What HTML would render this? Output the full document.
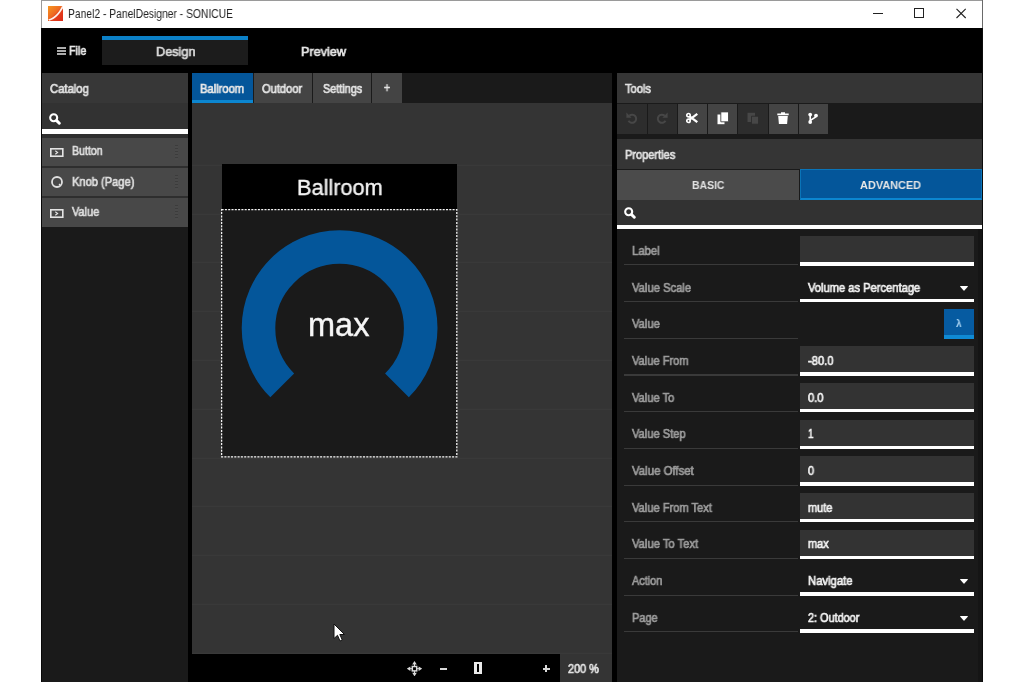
<!DOCTYPE html>
<html lang="en">
<head>
<meta charset="utf-8">
<title>Panel2 - PanelDesigner - SONICUE</title>
<style>
*{box-sizing:border-box;margin:0;padding:0}
html,body{width:1024px;height:682px;overflow:hidden;background:#fff}
body{font-family:"Liberation Sans","DejaVu Sans",sans-serif;font-size:12px;position:relative}
#win{position:absolute;left:41px;top:0;width:942px;height:682px;background:#000;overflow:hidden}
.abs{position:absolute}
.t{position:absolute;white-space:nowrap;transform-origin:0 50%;line-height:1;will-change:transform}
</style>
</head>
<body>
<div id="win">
  <div class="abs" style="left:0.00px;top:0.00px;width:942.00px;height:28.00px;background:#fff;border-top:1px solid #9a9a9a"></div>
  <svg class="abs" style="left:7.20px;top:5.60px" width="15.2" height="15" viewBox="0 0 15.2 15"><defs><linearGradient id="lg" x1="0" y1="0" x2="1" y2="1"><stop offset="0" stop-color="#f7981f"/><stop offset=".45" stop-color="#ee6a22"/><stop offset=".6" stop-color="#e4401c"/><stop offset="1" stop-color="#dc2818"/></linearGradient></defs><rect width="15.200" height="15" fill="url(#lg)"/><path d="M.3 13.300C5.500 12.300 10.500 7.500 14 .3L15.200 0V1.800C11.500 8.500 6.500 13.200 1.200 14.700Z" fill="#fff" opacity=".93"/></svg>
  <span class="t" style="left:27.40px;top:7.74px;font-size:12px;color:#222;transform:scaleX(0.8588);">Panel2 - PanelDesigner - SONICUE</span>
  <svg class="abs" style="left:827.00px;top:4.00px" width="110" height="20" viewBox="0 0 110 20"><path d="M5 9.500H15" stroke="#222" stroke-width="1" fill="none"/><rect x="46.500" y="4.500" width="9" height="9" stroke="#222" stroke-width="1" fill="none"/><path d="M88.500 4.800L97.700 14M97.700 4.800L88.500 14" stroke="#222" stroke-width="1.100" fill="none"/></svg>
  <div class="abs" style="left:941.00px;top:0.00px;width:1.00px;height:28.00px;background:#6a6a6a;"></div>
  <div class="abs" style="left:0.00px;top:0.00px;width:1.00px;height:28.00px;background:#9a9a9a;"></div>
  <div class="abs" style="left:0.00px;top:28.00px;width:942.00px;height:45.00px;background:#000;"></div>
  <svg class="abs" style="left:16.00px;top:47.00px" width="9" height="8" viewBox="0 0 9 8"><path d="M0 1H9M0 4H9M0 7H9" stroke="#e6e6e6" stroke-width="1.700"/></svg>
  <span class="t" style="left:28.20px;top:45.04px;font-size:12px;-webkit-text-stroke:0.7px #e8e8e8;color:#e8e8e8;transform:scaleX(0.8929);">File</span>
  <div class="abs" style="left:60.80px;top:36.00px;width:146.70px;height:29.20px;background:#1c1c1c;border-top:4px solid #0b80c6"></div>
  <span class="t" style="left:114.50px;top:44.60px;font-size:13px;-webkit-text-stroke:0.7px #dadada;color:#dadada;transform:scaleX(0.9753);">Design</span>
  <span class="t" style="left:259.60px;top:44.60px;font-size:13px;-webkit-text-stroke:0.7px #e6e6e6;color:#e6e6e6;transform:scaleX(0.9747);">Preview</span>
  <div class="abs" style="left:0.00px;top:73.00px;width:146.50px;height:609.00px;background:#1a1a1a;"></div>
  <div class="abs" style="left:0.00px;top:73.00px;width:146.50px;height:30.40px;background:#373737;"></div>
  <span class="t" style="left:9.00px;top:82.54px;font-size:12px;-webkit-text-stroke:0.7px #e2e2e2;color:#e2e2e2;transform:scaleX(0.9378);">Catalog</span>
  <div class="abs" style="left:0.00px;top:103.40px;width:146.50px;height:26.00px;background:#323232;"></div>
  <svg class="abs" style="left:7.60px;top:112.80px" width="12" height="12" viewBox="0 0 12 12"><circle cx="4.700" cy="4.700" r="3.500" stroke="#fff" stroke-width="2.100" fill="none"/><path d="M7.600 7.600L10.300 10.300" stroke="#fff" stroke-width="2.900" stroke-linecap="round"/></svg>
  <div class="abs" style="left:0.00px;top:129.40px;width:146.50px;height:4.40px;background:#fff;"></div>
  <div class="abs" style="left:0.00px;top:133.50px;width:146.50px;height:93.50px;background:#2e2e2e;"></div>
  <div class="abs" style="left:1.00px;top:137.60px;width:145.50px;height:28.40px;background:#484848;"></div>
  <svg class="abs" style="left:9.00px;top:148.00px" width="14" height="9" viewBox="0 0 14 9"><rect x=".8" y=".8" width="12" height="7.400" stroke="#e4e4e4" stroke-width="1.600" fill="none"/><path d="M5.300 2.800L7.600 4.500L5.300 6.200" stroke="#e4e4e4" stroke-width="1.100" fill="none"/></svg>
  <span class="t" style="left:31.30px;top:145.44px;font-size:12px;-webkit-text-stroke:0.7px #dedede;color:#dedede;transform:scaleX(0.8835);">Button</span>
  <div class="abs" style="left:133.70px;top:144.60px;width:3.50px;height:15.00px;background:transparent;background:repeating-linear-gradient(to bottom,#3c3c3c 0,#3c3c3c 1.200px,#4a4a4a 1.200px,#4a4a4a 3px)"></div>
  <div class="abs" style="left:1.00px;top:168.00px;width:145.50px;height:28.40px;background:#484848;"></div>
  <svg class="abs" style="left:9.80px;top:176.40px" width="12" height="12" viewBox="0 0 12 12"><circle cx="6" cy="6" r="5" stroke="#e0e0e0" stroke-width="1.800" fill="none"/><path d="M8 8L9.500 9.500" stroke="#e4e4e4" stroke-width="1.200"/></svg>
  <span class="t" style="left:31.30px;top:175.84px;font-size:12px;-webkit-text-stroke:0.7px #dedede;color:#dedede;transform:scaleX(0.9262);">Knob (Page)</span>
  <div class="abs" style="left:133.70px;top:175.00px;width:3.50px;height:15.00px;background:transparent;background:repeating-linear-gradient(to bottom,#3c3c3c 0,#3c3c3c 1.200px,#4a4a4a 1.200px,#4a4a4a 3px)"></div>
  <div class="abs" style="left:1.00px;top:198.40px;width:145.50px;height:28.40px;background:#484848;"></div>
  <svg class="abs" style="left:9.00px;top:208.80px" width="14" height="9" viewBox="0 0 14 9"><rect x=".8" y=".8" width="12" height="7.400" stroke="#e4e4e4" stroke-width="1.600" fill="none"/><path d="M5.300 2.800L7.600 4.500L5.300 6.200" stroke="#e4e4e4" stroke-width="1.100" fill="none"/></svg>
  <span class="t" style="left:31.30px;top:206.24px;font-size:12px;-webkit-text-stroke:0.7px #dedede;color:#dedede;transform:scaleX(0.9109);">Value</span>
  <div class="abs" style="left:133.70px;top:205.40px;width:3.50px;height:15.00px;background:transparent;background:repeating-linear-gradient(to bottom,#3c3c3c 0,#3c3c3c 1.200px,#4a4a4a 1.200px,#4a4a4a 3px)"></div>
  <div class="abs" style="left:0.00px;top:28.00px;width:1.00px;height:654.00px;background:#080808;"></div>
  <div class="abs" style="left:146.50px;top:73.00px;width:4.70px;height:609.00px;background:#000;"></div>
  <div class="abs" style="left:570.80px;top:73.00px;width:4.90px;height:609.00px;background:#000;"></div>
  <div class="abs" style="left:151.20px;top:73.00px;width:419.60px;height:30.00px;background:#1a1a1a;"></div>
  <div class="abs" style="left:151.20px;top:103.00px;width:419.60px;height:579.00px;background:#343434;background-image:repeating-linear-gradient(to bottom,transparent 0,transparent 47.800px,#3a3a3a 47.800px,#3a3a3a 48.800px),repeating-linear-gradient(to right,transparent 0,transparent 47.800px,transparent 47.800px,transparent 48.800px);background-position:0 13.900px,28.800px 0"></div>
  <div class="abs" style="left:151.20px;top:73.20px;width:60.80px;height:29.80px;background:#04569a;border-bottom:3px solid #0c86d0"></div>
  <div class="abs" style="left:213.00px;top:73.20px;width:58.20px;height:29.80px;background:#444;"></div>
  <div class="abs" style="left:272.20px;top:73.20px;width:58.00px;height:29.80px;background:#444;"></div>
  <div class="abs" style="left:331.20px;top:73.20px;width:29.40px;height:29.80px;background:#444;"></div>
  <span class="t" style="left:159.40px;top:82.54px;font-size:12px;-webkit-text-stroke:0.7px #e8e8e8;color:#e8e8e8;transform:scaleX(0.9309);">Ballroom</span>
  <span class="t" style="left:221.40px;top:82.54px;font-size:12px;-webkit-text-stroke:0.7px #e4e4e4;color:#e4e4e4;transform:scaleX(0.9268);">Outdoor</span>
  <span class="t" style="left:281.50px;top:82.54px;font-size:12px;-webkit-text-stroke:0.7px #e4e4e4;color:#e4e4e4;transform:scaleX(0.9037);">Settings</span>
  <span class="t" style="left:342.50px;top:82.04px;font-size:12px;-webkit-text-stroke:0.7px #e4e4e4;color:#e4e4e4;transform:scaleX(0.8571);">+</span>
  <div class="abs" style="left:181.00px;top:164.00px;width:235.00px;height:45.00px;background:#000;"></div>
  <span class="t" style="left:256.10px;top:176.68px;font-size:22px;color:#f4f4f4;transform:scaleX(0.9865);-webkit-text-stroke:.35px #f4f4f4;">Ballroom</span>
  <div class="abs" style="left:180.50px;top:209.00px;width:235.30px;height:247.30px;background:#1a1a1a;"></div>
  <svg class="abs" style="left:180.00px;top:208.50px" width="237" height="249" viewBox="0 0 237 249"><rect x=".6" y=".6" width="235.200" height="247.200" fill="none" stroke="#f4f4f4" stroke-width="1.300" stroke-dasharray="2 1.300"/><path d="M61.25 176.45A81.1 81.1 0 1 1 175.95 176.45" fill="none" stroke="#04569a" stroke-width="33.6"/></svg>
  <span class="t" style="left:267.10px;top:308.99px;font-size:32.5px;color:#f6f6f6;transform:scaleX(1.0004);-webkit-text-stroke:.4px #f6f6f6;">max</span>
  <svg class="abs" style="left:292.00px;top:623.00px" width="13" height="20" viewBox="0 0 13 20"><path d="M1 1V15.500L4.500 12.300L7 18L9.300 17L6.800 11.500H11.500Z" fill="#fff" stroke="#111" stroke-width="1"/></svg>
  <div class="abs" style="left:151.20px;top:654.00px;width:368.10px;height:28.00px;background:#000;"></div>
  <svg class="abs" style="left:365.50px;top:660.70px" width="15" height="15.4" viewBox="0 0 15 15.4"><g fill="#dcdcdc"><path d="M7.500 0L9.800 3.600H5.200Z"/><path d="M7.500 15.400L9.800 11.800H5.200Z"/><path d="M-.2 7.700L3.400 5.400V10Z"/><path d="M15.200 7.700L11.600 5.400V10Z"/></g><path d="M7.500 3V12.400M2.800 7.700H12.200" stroke="#dcdcdc" stroke-width="1"/><rect x="5.300" y="5.500" width="4.400" height="4.400" fill="#000" stroke="#dcdcdc" stroke-width="1.500"/></svg>
  <div class="abs" style="left:399.20px;top:667.90px;width:7.20px;height:1.70px;background:#d8d8d8;"></div>
  <div class="abs" style="left:433.00px;top:662.30px;width:8.00px;height:11.60px;background:#eaeaea;"></div>
  <div class="abs" style="left:436.40px;top:663.80px;width:1.30px;height:8.60px;background:#000;"></div>
  <div class="abs" style="left:501.50px;top:667.90px;width:7.20px;height:1.70px;background:#d8d8d8;"></div>
  <div class="abs" style="left:504.30px;top:665.10px;width:1.70px;height:7.20px;background:#d8d8d8;"></div>
  <span class="t" style="left:527.00px;top:662.74px;font-size:12px;-webkit-text-stroke:0.7px #e2e2e2;color:#e2e2e2;transform:scaleX(0.9088);">200 %</span>
  <div class="abs" style="left:575.70px;top:73.00px;width:366.30px;height:609.00px;background:#1a1a1a;"></div>
  <div class="abs" style="left:575.70px;top:73.20px;width:366.30px;height:29.80px;background:#353535;"></div>
  <span class="t" style="left:584.20px;top:82.54px;font-size:12px;-webkit-text-stroke:0.7px #e2e2e2;color:#e2e2e2;transform:scaleX(0.9250);">Tools</span>
  <div class="abs" style="left:575.70px;top:139.20px;width:366.30px;height:30.20px;background:#353535;"></div>
  <span class="t" style="left:584.20px;top:148.54px;font-size:12px;-webkit-text-stroke:0.7px #e2e2e2;color:#e2e2e2;transform:scaleX(0.9187);">Properties</span>
  <div class="abs" style="left:576.40px;top:103.50px;width:29.20px;height:30.10px;background:#2d2d2d;"></div>
  <svg class="abs" style="left:584.80px;top:112.30px" width="12" height="12.5" viewBox="0 0 12 12.5"><path d="M3.300 3.700A4.100 4.100 0 1 1 2.500 8.800" stroke="#474747" stroke-width="2" fill="none"/><path d="M.4 .6V5.800H5.600Z" fill="#474747"/></svg>
  <div class="abs" style="left:606.66px;top:103.50px;width:29.20px;height:30.10px;background:#2d2d2d;"></div>
  <svg class="abs" style="left:615.06px;top:112.30px" width="12" height="12.5" viewBox="0 0 12 12.5"><path d="M8.700 3.700A4.100 4.100 0 1 0 9.500 8.800" stroke="#474747" stroke-width="2" fill="none"/><path d="M11.600 .6V5.800H6.400Z" fill="#474747"/></svg>
  <div class="abs" style="left:636.92px;top:103.50px;width:29.20px;height:30.10px;background:#444;"></div>
  <svg class="abs" style="left:645.32px;top:112.30px" width="12" height="12.5" viewBox="0 0 12 12.5"><path d="M3.600 4.300L11.300 10.200M3.600 7.700L11.300 1.800" stroke="#fff" stroke-width="2.300" fill="none"/><circle cx="2.500" cy="3.200" r="1.700" stroke="#fff" stroke-width="1.700" fill="none"/><circle cx="2.500" cy="8.800" r="1.700" stroke="#fff" stroke-width="1.700" fill="none"/></svg>
  <div class="abs" style="left:667.18px;top:103.50px;width:29.20px;height:30.10px;background:#444;"></div>
  <svg class="abs" style="left:675.58px;top:112.30px" width="12" height="12.5" viewBox="0 0 12 12.5"><path d="M.5 2.500H7.500V12.200H.5Z" fill="#fff"/><path d="M3.800 -.1H11.500V9.800H3.800Z" fill="#fff" stroke="#444" stroke-width=".9"/></svg>
  <div class="abs" style="left:697.44px;top:103.50px;width:29.20px;height:30.10px;background:#2d2d2d;"></div>
  <svg class="abs" style="left:705.84px;top:112.30px" width="12" height="12.5" viewBox="0 0 12 12.5"><path d="M.5 .8H8V10H.5Z" fill="#474747"/><path d="M4.500 4.200H11.500V12.200H4.500Z" fill="#474747" stroke="#2d2d2d" stroke-width=".9"/></svg>
  <div class="abs" style="left:727.70px;top:103.50px;width:29.20px;height:30.10px;background:#444;"></div>
  <svg class="abs" style="left:736.10px;top:112.30px" width="12" height="12.5" viewBox="0 0 12 12.5"><path d="M.3 1.500H11.700V3.300H.3ZM4 .2H8V2H4ZM1.200 4.100H10.800L10.100 12H1.900Z" fill="#fff"/></svg>
  <div class="abs" style="left:757.96px;top:103.50px;width:29.20px;height:30.10px;background:#444;"></div>
  <svg class="abs" style="left:766.36px;top:112.30px" width="12" height="12.5" viewBox="0 0 12 12.5"><circle cx="3.200" cy="2.600" r="1.900" fill="#fff"/><circle cx="3.200" cy="10" r="1.900" fill="#fff"/><circle cx="9" cy="3.600" r="1.900" fill="#fff"/><path d="M3.200 2.600V10M9 3.600C9 7.300 3.200 6.200 3.200 9.500" stroke="#fff" stroke-width="1.600" fill="none"/></svg>
  <div class="abs" style="left:575.70px;top:169.60px;width:182.60px;height:30.20px;background:#4b4b4b;"></div>
  <div class="abs" style="left:759.00px;top:169.40px;width:182.00px;height:30.40px;background:#04569a;border:1.200px solid #0a74b8;border-bottom:2.800px solid #0c86d0"></div>
  <span class="t" style="left:650.90px;top:179.79px;font-size:11px;font-weight:bold;color:#e2e2e2;transform:scaleX(0.9460);">BASIC</span>
  <span class="t" style="left:819.20px;top:179.79px;font-size:11px;font-weight:bold;color:#e6e6e6;transform:scaleX(0.9919);">ADVANCED</span>
  <div class="abs" style="left:575.70px;top:199.80px;width:366.30px;height:25.60px;background:#323232;"></div>
  <svg class="abs" style="left:583.20px;top:206.80px" width="12" height="12" viewBox="0 0 12 12"><circle cx="4.700" cy="4.700" r="3.500" stroke="#fff" stroke-width="2.100" fill="none"/><path d="M7.600 7.600L10.300 10.300" stroke="#fff" stroke-width="2.900" stroke-linecap="round"/></svg>
  <div class="abs" style="left:575.70px;top:225.30px;width:366.30px;height:3.80px;background:#fff;"></div>
  <div class="abs" style="left:936.60px;top:229.10px;width:5.40px;height:453.00px;background:#151515;"></div>
  <span class="t" style="left:591.30px;top:244.84px;font-size:12px;-webkit-text-stroke:0.7px #9c9c9c;color:#9c9c9c;transform:scaleX(0.9430);">Label</span>
  <div class="abs" style="left:583.00px;top:264.30px;width:173.50px;height:1.20px;background:#3a3a3a;"></div>
  <div class="abs" style="left:759.30px;top:236.00px;width:173.90px;height:26.00px;background:#333;"></div>
  <div class="abs" style="left:759.30px;top:262.00px;width:173.90px;height:3.60px;background:#fff;"></div>
  <span class="t" style="left:591.30px;top:281.54px;font-size:12px;-webkit-text-stroke:0.7px #9c9c9c;color:#9c9c9c;transform:scaleX(0.9347);">Value Scale</span>
  <div class="abs" style="left:583.00px;top:301.00px;width:173.50px;height:1.20px;background:#3a3a3a;"></div>
  <div class="abs" style="left:759.30px;top:298.70px;width:173.90px;height:3.60px;background:#fff;"></div>
  <span class="t" style="left:767.20px;top:281.54px;font-size:12px;-webkit-text-stroke:0.7px #f2f2f2;color:#f2f2f2;transform:scaleX(0.9292);">Volume as Percentage</span>
  <svg class="abs" style="left:919.20px;top:285.80px" width="8" height="4.8" viewBox="0 0 8 4.8"><path d="M.4 0H7.600Q8.200 .2 7.700 .8L4.400 4.500Q4 4.900 3.600 4.500L.3 .8Q-.2 .2 .4 0Z" fill="#fff"/></svg>
  <span class="t" style="left:591.30px;top:318.24px;font-size:12px;-webkit-text-stroke:0.7px #9c9c9c;color:#9c9c9c;transform:scaleX(0.9311);">Value</span>
  <div class="abs" style="left:583.00px;top:337.70px;width:173.50px;height:1.20px;background:#3a3a3a;"></div>
  <div class="abs" style="left:903.40px;top:309.40px;width:29.80px;height:29.40px;background:#065ba1;border-bottom:4px solid #0f8ad4"></div>
  <span class="t" style="left:915.40px;top:318.37px;font-size:11.5px;font-weight:bold;color:#a9d3f3;transform:scaleX(0.8784);">λ</span>
  <span class="t" style="left:591.30px;top:354.94px;font-size:12px;-webkit-text-stroke:0.7px #9c9c9c;color:#9c9c9c;transform:scaleX(0.9227);">Value From</span>
  <div class="abs" style="left:583.00px;top:374.40px;width:173.50px;height:1.20px;background:#3a3a3a;"></div>
  <div class="abs" style="left:759.30px;top:346.10px;width:173.90px;height:26.00px;background:#333;"></div>
  <div class="abs" style="left:759.30px;top:372.10px;width:173.90px;height:3.60px;background:#fff;"></div>
  <span class="t" style="left:767.20px;top:354.94px;font-size:12px;-webkit-text-stroke:0.7px #f2f2f2;color:#f2f2f2;transform:scaleX(0.9315);">-80.0</span>
  <span class="t" style="left:591.30px;top:391.64px;font-size:12px;-webkit-text-stroke:0.7px #9c9c9c;color:#9c9c9c;transform:scaleX(0.9249);">Value To</span>
  <div class="abs" style="left:583.00px;top:411.10px;width:173.50px;height:1.20px;background:#3a3a3a;"></div>
  <div class="abs" style="left:759.30px;top:382.80px;width:173.90px;height:26.00px;background:#333;"></div>
  <div class="abs" style="left:759.30px;top:408.80px;width:173.90px;height:3.60px;background:#fff;"></div>
  <span class="t" style="left:767.20px;top:391.64px;font-size:12px;-webkit-text-stroke:0.7px #f2f2f2;color:#f2f2f2;transform:scaleX(0.9263);">0.0</span>
  <span class="t" style="left:591.30px;top:428.34px;font-size:12px;-webkit-text-stroke:0.7px #9c9c9c;color:#9c9c9c;transform:scaleX(0.9244);">Value Step</span>
  <div class="abs" style="left:583.00px;top:447.80px;width:173.50px;height:1.20px;background:#3a3a3a;"></div>
  <div class="abs" style="left:759.30px;top:419.50px;width:173.90px;height:26.00px;background:#333;"></div>
  <div class="abs" style="left:759.30px;top:445.50px;width:173.90px;height:3.60px;background:#fff;"></div>
  <span class="t" style="left:767.20px;top:428.34px;font-size:12px;-webkit-text-stroke:0.7px #f2f2f2;color:#f2f2f2;transform:scaleX(0.8151);">1</span>
  <span class="t" style="left:591.30px;top:465.04px;font-size:12px;-webkit-text-stroke:0.7px #9c9c9c;color:#9c9c9c;transform:scaleX(0.9511);">Value Offset</span>
  <div class="abs" style="left:583.00px;top:484.50px;width:173.50px;height:1.20px;background:#3a3a3a;"></div>
  <div class="abs" style="left:759.30px;top:456.20px;width:173.90px;height:26.00px;background:#333;"></div>
  <div class="abs" style="left:759.30px;top:482.20px;width:173.90px;height:3.60px;background:#fff;"></div>
  <span class="t" style="left:767.20px;top:465.04px;font-size:12px;-webkit-text-stroke:0.7px #f2f2f2;color:#f2f2f2;transform:scaleX(0.9057);">0</span>
  <span class="t" style="left:591.30px;top:501.74px;font-size:12px;-webkit-text-stroke:0.7px #9c9c9c;color:#9c9c9c;transform:scaleX(0.9252);">Value From Text</span>
  <div class="abs" style="left:583.00px;top:521.20px;width:173.50px;height:1.20px;background:#3a3a3a;"></div>
  <div class="abs" style="left:759.30px;top:492.90px;width:173.90px;height:26.00px;background:#333;"></div>
  <div class="abs" style="left:759.30px;top:518.90px;width:173.90px;height:3.60px;background:#fff;"></div>
  <span class="t" style="left:767.20px;top:501.74px;font-size:12px;-webkit-text-stroke:0.7px #f2f2f2;color:#f2f2f2;transform:scaleX(0.9127);">mute</span>
  <span class="t" style="left:591.30px;top:538.44px;font-size:12px;-webkit-text-stroke:0.7px #9c9c9c;color:#9c9c9c;transform:scaleX(0.9343);">Value To Text</span>
  <div class="abs" style="left:583.00px;top:557.90px;width:173.50px;height:1.20px;background:#3a3a3a;"></div>
  <div class="abs" style="left:759.30px;top:529.60px;width:173.90px;height:26.00px;background:#333;"></div>
  <div class="abs" style="left:759.30px;top:555.60px;width:173.90px;height:3.60px;background:#fff;"></div>
  <span class="t" style="left:767.20px;top:538.44px;font-size:12px;-webkit-text-stroke:0.7px #f2f2f2;color:#f2f2f2;transform:scaleX(0.9105);">max</span>
  <span class="t" style="left:591.30px;top:575.14px;font-size:12px;-webkit-text-stroke:0.7px #9c9c9c;color:#9c9c9c;transform:scaleX(0.9079);">Action</span>
  <div class="abs" style="left:583.00px;top:594.60px;width:173.50px;height:1.20px;background:#3a3a3a;"></div>
  <div class="abs" style="left:759.30px;top:592.30px;width:173.90px;height:3.60px;background:#fff;"></div>
  <span class="t" style="left:767.20px;top:575.14px;font-size:12px;-webkit-text-stroke:0.7px #f2f2f2;color:#f2f2f2;transform:scaleX(0.9393);">Navigate</span>
  <svg class="abs" style="left:919.20px;top:579.40px" width="8" height="4.8" viewBox="0 0 8 4.8"><path d="M.4 0H7.600Q8.200 .2 7.700 .8L4.400 4.500Q4 4.900 3.600 4.500L.3 .8Q-.2 .2 .4 0Z" fill="#fff"/></svg>
  <span class="t" style="left:591.30px;top:611.84px;font-size:12px;-webkit-text-stroke:0.7px #9c9c9c;color:#9c9c9c;transform:scaleX(0.9143);">Page</span>
  <div class="abs" style="left:583.00px;top:631.30px;width:173.50px;height:1.20px;background:#3a3a3a;"></div>
  <div class="abs" style="left:759.30px;top:629.00px;width:173.90px;height:3.60px;background:#fff;"></div>
  <span class="t" style="left:767.20px;top:611.84px;font-size:12px;-webkit-text-stroke:0.7px #f2f2f2;color:#f2f2f2;transform:scaleX(0.9057);">2: Outdoor</span>
  <svg class="abs" style="left:919.20px;top:616.10px" width="8" height="4.8" viewBox="0 0 8 4.8"><path d="M.4 0H7.600Q8.200 .2 7.700 .8L4.400 4.500Q4 4.900 3.600 4.500L.3 .8Q-.2 .2 .4 0Z" fill="#fff"/></svg>
  <div class="abs" style="left:941.00px;top:28.00px;width:1.00px;height:654.00px;background:#0c0c0c;"></div>
</div>
</body>
</html>
